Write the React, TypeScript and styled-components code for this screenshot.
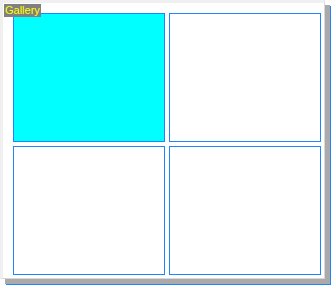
import styled, { createGlobalStyle } from "styled-components";

const GlobalStyle = createGlobalStyle`
  html, body {
    margin: 0;
    height: 100%;
    background: #ffffff;
    font-family: "Liberation Sans", Arial, sans-serif;
  }
  #root {
    height: 100%;
  }
`;

const Page = styled.div`
  height: 288px;
  width: 334px;
`;

const Frame = styled.div`
  position: relative;
  box-sizing: border-box;
  width: 325px;
  height: 279px;
  background: #ffffff;
  border-style: solid;
  border-width: 3px 1px 1px 3px;
  border-color: #f0f0f0 #d8d8d8 #d8d8d8 #f0f0f0;
  padding: 10px 3px 3px 10px;
  box-shadow: 5px 5px 0 #aaaaaa, 6px 6px 0 #1e84ff;
`;

const Label = styled.div`
  position: absolute;
  top: 1px;
  left: 1px;
  height: 13px;
  padding: 0 1px;
  background: #808080;
  color: #ffff00;
  font-size: 11px;
  line-height: 13px;
`;

const Grid = styled.div`
  display: grid;
  grid-template-columns: repeat(2, 152px);
  grid-template-rows: repeat(2, 129px);
  gap: 4px;
`;

const Cell = styled.div<{ $active?: boolean }>`
  box-sizing: border-box;
  border: 1px solid #1e84ff;
  background: ${(p) => (p.$active ? "#00ffff" : "#ffffff")};
`;

function App() {
  return (
    <Page>
      <GlobalStyle />
      <Frame>
        <Grid>
          <Cell $active />
          <Cell />
          <Cell />
          <Cell />
        </Grid>
        <Label>Gallery</Label>
      </Frame>
    </Page>
  );
}

export default App;
